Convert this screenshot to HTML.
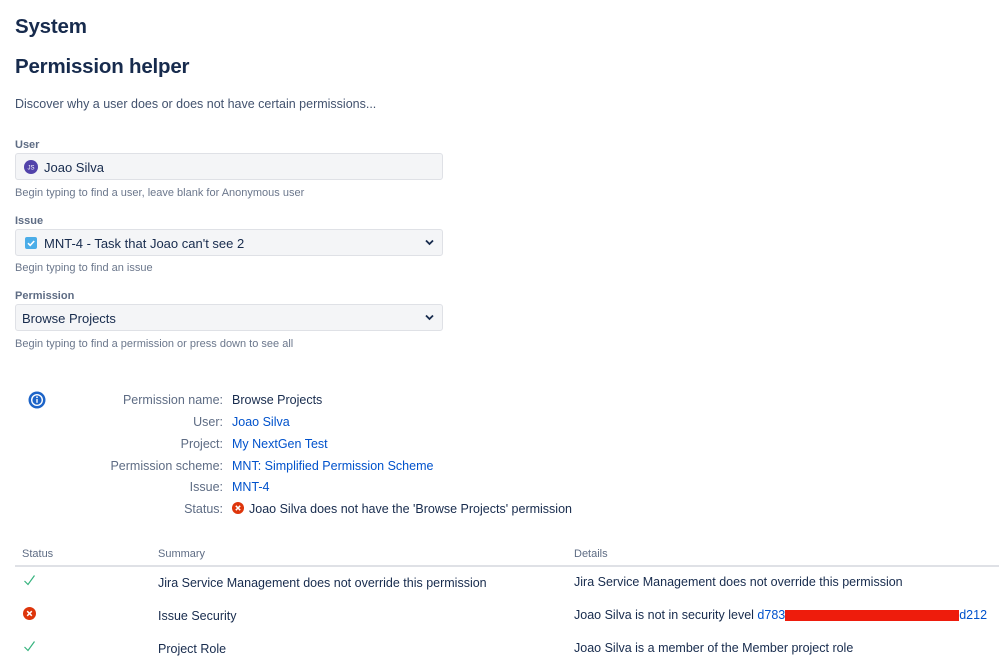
<!DOCTYPE html>
<html><head><meta charset="utf-8"><style>
*{margin:0;padding:0;box-sizing:border-box}
body{width:999px;height:666px;overflow:hidden;background:#fff;font-family:"Liberation Sans",sans-serif;color:#172b4d;position:relative}
.a{position:absolute;white-space:nowrap}
h1{position:absolute;font-size:20.5px;font-weight:bold;color:#172b4d;left:15px;letter-spacing:-0.2px}
.lbl{font-size:11px;font-weight:bold;color:#5e6c84}
.hint{font-size:11px;color:#6b778c}
.box{position:absolute;left:15px;width:428px;height:27px;background:#f4f5f7;border:1px solid #dfe1e6;border-radius:3px;font-size:13px;color:#172b4d}
.box span{position:absolute;top:6px}
.chev{position:absolute;right:8px;top:9px}
.k{font-size:12.5px;color:#5e6c84;text-align:right;width:223px;left:0}
.v{font-size:12.5px;left:232px;color:#172b4d}
.lnk{color:#0052cc}
.th{font-size:11px;color:#5e6c84}
.td{font-size:12.5px;color:#172b4d}
</style></head><body>
<h1 style="top:15px">System</h1>
<h1 style="top:55px">Permission helper</h1>
<div class="a" style="left:15px;top:97px;font-size:12.5px;color:#42526e">Discover why a user does or does not have certain permissions...</div>

<div class="a lbl" style="left:15px;top:139px">User</div>
<div class="box" style="top:153px"><svg style="position:absolute;left:8px;top:6px" width="14" height="14"><circle cx="7" cy="7" r="7" fill="#5243aa"/><text x="7" y="9.5" font-size="6" fill="#fff" text-anchor="middle" font-family="Liberation Sans">JS</text></svg><span style="left:28px">Joao Silva</span></div>
<div class="a hint" style="left:15px;top:187px">Begin typing to find a user, leave blank for Anonymous user</div>

<div class="a lbl" style="left:15px;top:215px">Issue</div>
<div class="box" style="top:229px"><svg style="position:absolute;left:9px;top:7px" width="12" height="12"><rect width="12" height="12" rx="2" fill="#4bade8"/><path d="M3 6.2l2.2 2.2 4-4.4" stroke="#fff" stroke-width="1.6" fill="none"/></svg><span style="left:28px">MNT-4 - Task that Joao can't see 2</span><svg class="chev" width="9" height="7"><path d="M1 1.5l3.5 3.5 3.5-3.5" stroke="#172b4d" stroke-width="1.8" fill="none"/></svg></div>
<div class="a hint" style="left:15px;top:262px">Begin typing to find an issue</div>

<div class="a lbl" style="left:15px;top:290px">Permission</div>
<div class="box" style="top:304px"><span style="left:6px">Browse Projects</span><svg class="chev" width="9" height="7"><path d="M1 1.5l3.5 3.5 3.5-3.5" stroke="#172b4d" stroke-width="1.8" fill="none"/></svg></div>
<div class="a hint" style="left:15px;top:338px">Begin typing to find a permission or press down to see all</div>

<svg class="a" style="left:28px;top:391px" width="18" height="18"><circle cx="9" cy="9" r="8.5" fill="#1d64c8"/><circle cx="9" cy="9" r="6" fill="#fff"/><circle cx="9" cy="9" r="4.6" fill="#1d64c8"/><rect x="8.3" y="8" width="1.4" height="3.8" fill="#fff"/><circle cx="9" cy="6.3" r="0.9" fill="#fff"/></svg>
<div class="a k" style="top:393px">Permission name:</div><div class="a v" style="top:393px">Browse Projects</div>
<div class="a k" style="top:415px">User:</div><div class="a v lnk" style="top:415px">Joao Silva</div>
<div class="a k" style="top:437px">Project:</div><div class="a v lnk" style="top:437px">My NextGen Test</div>
<div class="a k" style="top:459px">Permission scheme:</div><div class="a v lnk" style="top:459px">MNT: Simplified Permission Scheme</div>
<div class="a k" style="top:480px">Issue:</div><div class="a v lnk" style="top:480px">MNT-4</div>
<div class="a k" style="top:502px">Status:</div>
<svg class="a" style="left:232px;top:502px" width="12" height="12"><circle cx="6" cy="6" r="6" fill="#de350b"/><path d="M3.8 3.8l4.4 4.4M8.2 3.8l-4.4 4.4" stroke="#fff" stroke-width="1.5"/></svg>
<div class="a v" style="top:502px;left:249px">Joao Silva does not have the 'Browse Projects' permission</div>

<div class="a th" style="left:22px;top:548px">Status</div>
<div class="a th" style="left:158px;top:548px">Summary</div>
<div class="a th" style="left:574px;top:548px">Details</div>
<div class="a" style="left:15px;top:565px;width:984px;height:2px;background:#dfe1e6"></div>

<svg class="a" style="left:23px;top:574px" width="13" height="12"><path d="M1.5 7l3.5 3.5 6.5-9" stroke="#36b37e" stroke-width="1.2" fill="none"/></svg>
<div class="a td" style="left:158px;top:576px">Jira Service Management does not override this permission</div>
<div class="a td" style="left:574px;top:575px">Jira Service Management does not override this permission</div>

<svg class="a" style="left:23px;top:607px" width="13" height="13"><circle cx="6.5" cy="6.5" r="6.5" fill="#de350b"/><path d="M4.2 4.2l4.6 4.6M8.8 4.2l-4.6 4.6" stroke="#fff" stroke-width="1.5"/></svg>
<div class="a td" style="left:158px;top:609px">Issue Security</div>
<div class="a td" style="left:574px;top:608px">Joao Silva is not in security level <span class="lnk">d783<span style="display:inline-block;width:174px;height:11px;background:#ee1c0c;vertical-align:middle"></span>d212</span></div>

<svg class="a" style="left:23px;top:640px" width="13" height="12"><path d="M1.5 7l3.5 3.5 6.5-9" stroke="#36b37e" stroke-width="1.2" fill="none"/></svg>
<div class="a td" style="left:158px;top:642px">Project Role</div>
<div class="a td" style="left:574px;top:641px">Joao Silva is a member of the Member project role</div>
</body></html>
